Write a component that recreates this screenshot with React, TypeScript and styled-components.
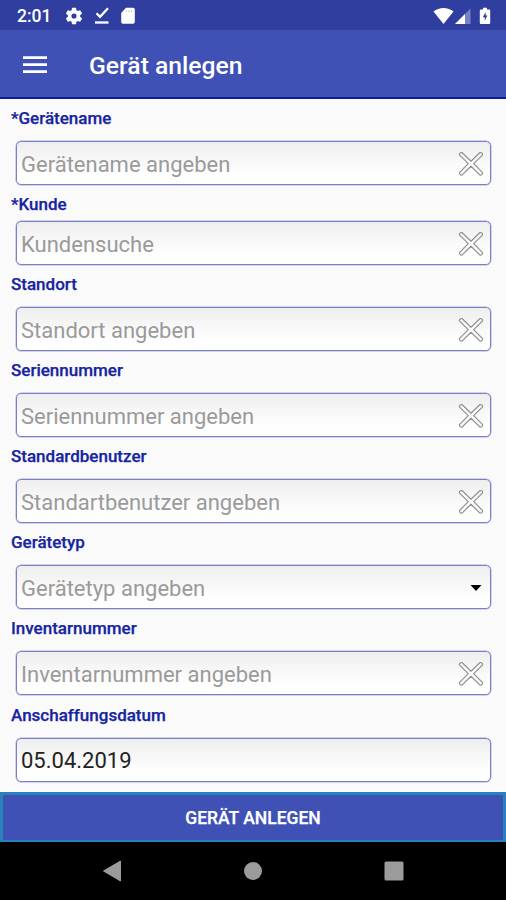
import React from "react";
import styled, { createGlobalStyle } from "styled-components";

const GlobalStyle = createGlobalStyle`
  * { box-sizing: border-box; }
  body { margin: 0; background: #fafafa; }
`;

const Screen = styled.div`
  width: 506px;
  height: 900px;
  display: flex;
  flex-direction: column;
  overflow: hidden;
  background: #fafafa;
  font-family: Roboto, sans-serif;
`;

const StatusBar = styled.header`
  height: 30px;
  flex: none;
  display: flex;
  align-items: center;
  padding: 1px 15px 0 17px;
  background: #303f9f;
  color: #fff;
`;

const Clock = styled.span`
  width: 48px;
  font-size: 17.5px;
  font-weight: 500;
  line-height: 20px;
`;

const StatusIcons = styled.div`
  display: flex;
  align-items: center;
  gap: 10.500px;
`;

const SystemIcons = styled.div`
  display: flex;
  align-items: center;
  margin-left: auto;
`;

const AppBar = styled.div`
  height: 69px;
  flex: none;
  display: flex;
  align-items: center;
  padding: 2px 0 0 23px;
  background: #3f51b5;
  border-bottom: 2px solid #0b1da3;
  color: #fff;
`;

const MenuButton = styled.button`
  display: flex;
  width: 24px;
  padding: 0;
  border: 0;
  background: none;
`;

const Title = styled.h1`
  margin: 0 0 0 42px;
  padding-top: 2px;
  font-size: 24.7px;
  font-weight: 500;
  line-height: 30px;
`;

const Form = styled.main`
  flex: 1;
  min-height: 0;
  display: flex;
  flex-direction: column;
  gap: 9.080px;
  padding: 9px 15px 0 11px;
`;

const Field = styled.div<{ $tight?: boolean }>`
  display: flex;
  flex-direction: column;
  gap: ${(p) => (p.$tight ? 7 : 13)}px;
`;

const Label = styled.label`
  height: 20px;
  font-size: 17px;
  font-weight: 500;
  line-height: 20px;
  color: #1624a0;
  -webkit-text-stroke: 0.25px #1624a0;
`;

const InputBox = styled.div`
  height: 44px;
  margin-left: 5px;
  display: flex;
  align-items: center;
  justify-content: space-between;
  padding: 1px 6px 0 4px;
  border: 1.5px solid #7b7fc6;
  border-radius: 5px;
  box-shadow: 0 0 0 0.5px #a9abd9;
  background: linear-gradient(#eeeeee, #fefefe 75%);
`;

const Value = styled.span<{ $filled?: boolean }>`
  padding-top: 2px;
  font-size: 22px;
  line-height: 28px;
  color: ${(p) => (p.$filled ? "#222" : "#9a9a9a")};
`;

const SubmitButton = styled.button`
  height: 50px;
  flex: none;
  padding: 0;
  border: 3px solid #2682b8;
  border-bottom-width: 2px;
  background: #3f51b5;
  color: #fff;
  font-family: inherit;
  font-size: 17.5px;
  font-weight: 500;
  -webkit-text-stroke: 0.25px #fff;
`;

const NavBar = styled.nav`
  height: 58px;
  flex: none;
  display: flex;
  align-items: center;
  justify-content: space-between;
  padding: 0 102px;
  background: #000;
`;

const Gear = () => (
  <svg width="18" height="18" viewBox="1.500 1.500 21 21" fill="#fff">
    <path d="M19.14 12.94c.04-.3.06-.61.06-.94s-.02-.64-.07-.94l2.03-1.58a.49.49 0 0 0 .12-.61l-1.92-3.32a.49.49 0 0 0-.59-.22l-2.39.96a7 7 0 0 0-1.62-.94l-.36-2.54A.48.48 0 0 0 13.92 2.4h-3.84a.47.47 0 0 0-.47.41l-.36 2.54a7.4 7.4 0 0 0-1.62.94l-2.39-.96a.47.47 0 0 0-.59.22L2.74 8.87a.47.47 0 0 0 .12.61l2.03 1.58a6 6 0 0 0 0 1.88l-2.03 1.58a.49.49 0 0 0-.12.61l1.92 3.32c.12.22.37.29.59.22l2.39-.96c.5.38 1.03.7 1.62.94l.36 2.54c.05.24.24.41.48.41h3.84c.24 0 .44-.17.47-.41l.36-2.54a7 7 0 0 0 1.62-.94l2.39.96c.22.08.47 0 .59-.22l1.92-3.32a.47.47 0 0 0-.12-.61zM12 15a3 3 0 1 1 0-6 3 3 0 0 1 0 6z" />
  </svg>
);

const CheckLine = () => (
  <svg width="16" height="18" viewBox="0 0 16 18" fill="none" stroke="#fff">
    <path d="M2.500 6.300 6 9.800 14 1.300" strokeWidth="2.300" />
    <path d="M1 15.500h13.500" strokeWidth="2.300" />
  </svg>
);

const SdCard = () => (
  <svg width="16" height="18" viewBox="0 0 16 18">
    <path d="M6 .8h7a1.800 1.800 0 0 1 1.800 1.800v12.400A1.800 1.800 0 0 1 13 16.800H3a1.800 1.800 0 0 1-1.800-1.800V6z" fill="#fff" />
    <path d="M6.500 3.500v1.500M9 3.500v1.500M11.500 3.500v1.500" stroke="#c3c7e3" strokeWidth="1.200" />
  </svg>
);

const Wifi = () => (
  <svg width="21" height="18" viewBox="0 0 21 18">
    <path d="M.5 4.500C6-.2 15-.2 20.500 4.500L10.500 17z" fill="#fff" />
  </svg>
);

const SignalSlot = styled.span`
  display: flex;
  margin-right: 8px;
`;

const Signal = () => (
  <SignalSlot>
    <svg width="17" height="18" viewBox="0 0 17 18">
      <path d="M16.500 1.500V17H1z" fill="#7782c2" />
      <path d="M11 7v10H1z" fill="#fff" />
    </svg>
  </SignalSlot>
);

const Battery = () => (
  <svg width="12" height="18" viewBox="0 0 12 18">
    <path d="M4 .8h4v1.600h2.200a1 1 0 0 1 1 1V16a1 1 0 0 1-1 1H1.800a1 1 0 0 1-1-1V3.400a1 1 0 0 1 1-1H4z" fill="#fff" />
    <path d="M6.700 5 3.800 10.200h1.900v3.600l2.700-5.200H6.700z" fill="#303f9f" />
  </svg>
);

const MenuIcon = () => (
  <svg width="24" height="18" viewBox="0 0 24 18">
    <path d="M0 1.600h24M0 8.600h24M0 15.600h24" stroke="#fff" strokeWidth="2.600" />
  </svg>
);

const ClearIcon = () => (
  <svg width="26" height="26" viewBox="0 0 26 26" fill="#fafafa" stroke="#909090" strokeWidth="1.200" strokeLinejoin="round">
    <path d="M1.400 3.800Q1.500 1.300 4 1.500L13 10.200 22 1.500Q24.500 1.300 24.600 3.800L15.700 12.700 24.600 21.600Q24.500 24.300 22 24.100L13 15.300 4 24.100Q1.500 24.300 1.400 21.600L10.300 12.700Z" />
  </svg>
);

const DropIcon = () => (
  <svg width="16" height="8" viewBox="0 0 16 8">
    <path d="M2.500 1h11L8 7z" fill="#000" />
  </svg>
);

const BackIcon = () => (
  <svg width="20" height="22" viewBox="0 0 20 22">
    <path d="M18.500 1v20L1.500 11z" fill="#9b9b9b" stroke="#9b9b9b" strokeLinejoin="round" />
  </svg>
);

const HomeIcon = () => (
  <svg width="20" height="20" viewBox="0 0 20 20">
    <circle cx="10" cy="10" r="9" fill="#9b9b9b" />
  </svg>
);

const RecentIcon = () => (
  <svg width="20" height="20" viewBox="0 0 20 20">
    <rect x=".5" y=".5" width="19" height="19" rx="1.500" fill="#9b9b9b" />
  </svg>
);

type FieldData = {
  label: string;
  text: string;
  icon?: "clear" | "drop";
  tight?: boolean;
  filled?: boolean;
};

const fields: FieldData[] = [
  { label: "*Gerätename", text: "Gerätename angeben", icon: "clear" },
  { label: "*Kunde", text: "Kundensuche", icon: "clear", tight: true },
  { label: "Standort", text: "Standort angeben", icon: "clear" },
  { label: "Seriennummer", text: "Seriennummer angeben", icon: "clear" },
  { label: "Standardbenutzer", text: "Standartbenutzer angeben", icon: "clear" },
  { label: "Gerätetyp", text: "Gerätetyp angeben", icon: "drop" },
  { label: "Inventarnummer", text: "Inventarnummer angeben", icon: "clear" },
  { label: "Anschaffungsdatum", text: "05.04.2019", filled: true },
];

export default function App() {
  return (
    <Screen>
      <GlobalStyle />
      <StatusBar>
        <Clock>2:01</Clock>
        <StatusIcons>
          <Gear />
          <CheckLine />
          <SdCard />
        </StatusIcons>
        <SystemIcons>
          <Wifi />
          <Signal />
          <Battery />
        </SystemIcons>
      </StatusBar>
      <AppBar>
        <MenuButton aria-label="Menü">
          <MenuIcon />
        </MenuButton>
        <Title>Gerät anlegen</Title>
      </AppBar>
      <Form>
        {fields.map((f) => (
          <Field key={f.label} $tight={f.tight}>
            <Label>{f.label}</Label>
            <InputBox>
              <Value $filled={f.filled}>{f.text}</Value>
              {f.icon === "clear" && <ClearIcon />}
              {f.icon === "drop" && <DropIcon />}
            </InputBox>
          </Field>
        ))}
      </Form>
      <SubmitButton>GERÄT ANLEGEN</SubmitButton>
      <NavBar>
        <BackIcon />
        <HomeIcon />
        <RecentIcon />
      </NavBar>
    </Screen>
  );
}
